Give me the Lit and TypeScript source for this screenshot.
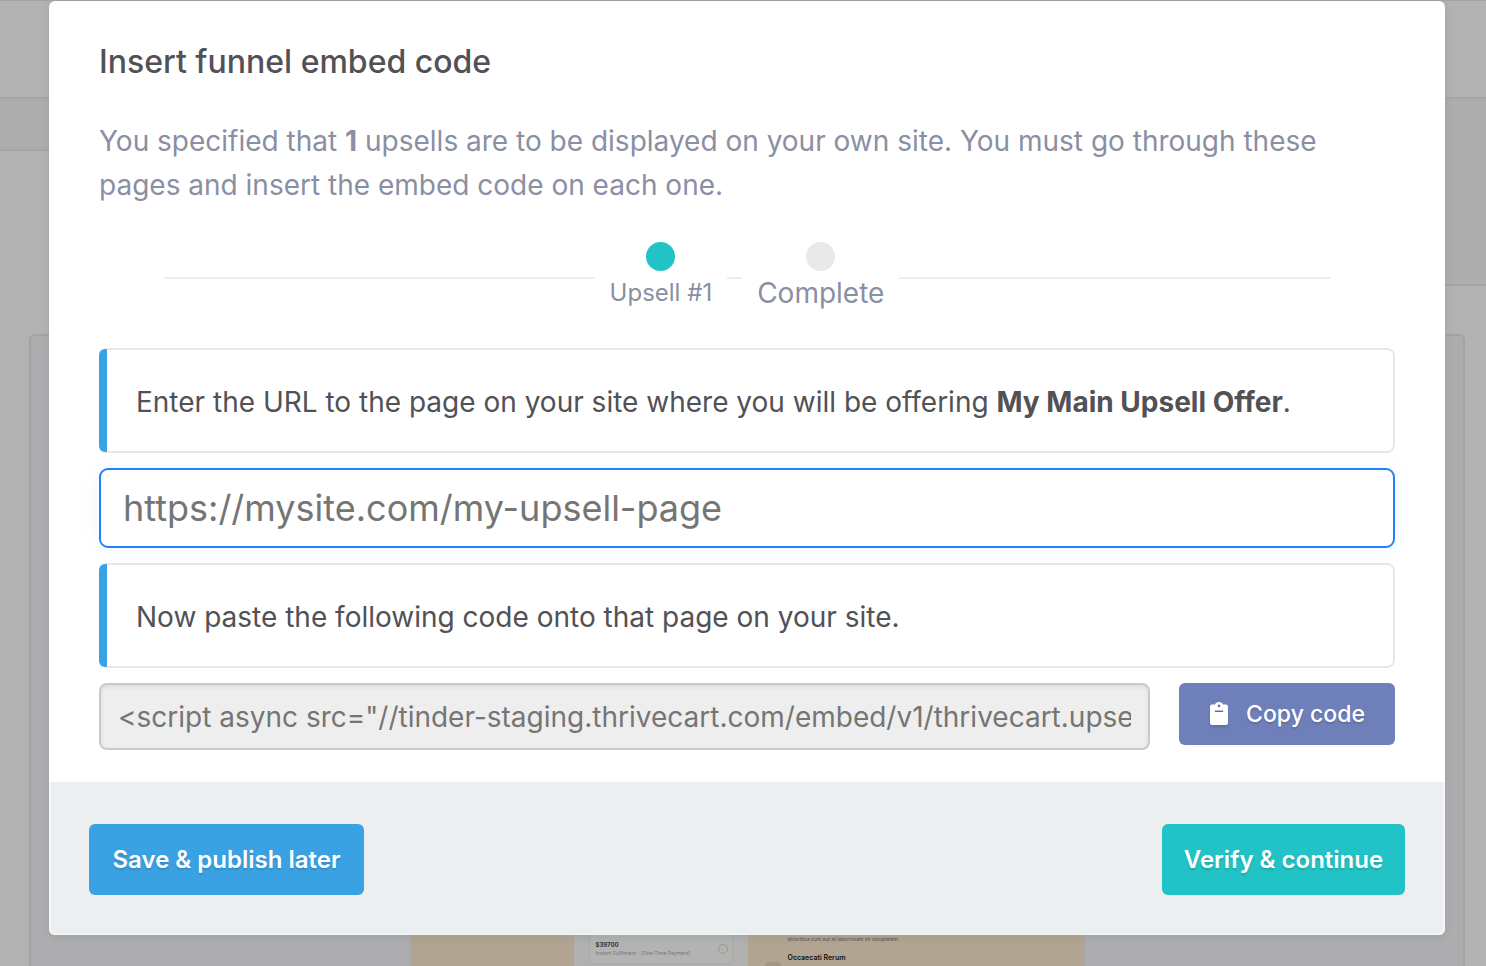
import { LitElement, html, css } from "lit";
import { customElement } from "lit/decorators.js";

const EMBED_CODE =
  '<script async src="//tinder-staging.thrivecart.com/embed/v1/thrivecart.upsell.js"></' + "script>";

/* Dimmed editor page that sits behind the dialog. */
@customElement("editor-backdrop")
export class EditorBackdrop extends LitElement {
  static styles = css`
    :host {
      display: flex;
      flex-direction: column;
      height: 100%;
      overflow: hidden;
      background: #b2b2b2;
      font-family: Inter, "Noto Sans", sans-serif;
    }
    * {
      box-sizing: border-box;
    }
    .topbar {
      flex: none;
      height: 99px;
      border-top: 1px solid #a3a3a3;
      border-bottom: 2px solid #a5a5a5;
    }
    .subbar {
      flex: none;
      height: 235px;
      display: flex;
      align-items: flex-start;
    }
    .tab,
    .side {
      flex: 1;
      background: #adadad;
      border-bottom: 2px solid #a5a5a5;
    }
    .tab {
      height: 52px;
    }
    .side {
      height: 187px;
    }
    .canvas {
      flex: 1;
      min-height: 0;
      margin: 0 21px 0 29px;
      border: 2px solid #a3a3a4;
      border-bottom: 0;
      border-radius: 6px 6px 0 0;
      background: #adadb0;
      display: flex;
      justify-content: center;
    }
    .preview {
      display: grid;
      grid-template-columns: 163px 174px 336px;
      background: #b1a592;
      border-left: 1px solid #a8a6a6;
      border-right: 1px solid #a8a6a6;
    }
    .checkout {
      grid-column: 2;
      display: flex;
      flex-direction: column;
      justify-content: flex-end;
      padding: 0 15px 2px;
      background: #b0b0b1;
    }
    .option {
      display: flex;
      align-items: center;
      justify-content: space-between;
      height: 38px;
      padding: 8px 4px 0 6px;
      border: 1px solid #a9a9a9;
      border-radius: 2px;
      background: #b3b3b3;
    }
    .price {
      font-size: 6px;
      line-height: 9px;
      font-weight: 700;
      color: #333;
    }
    .plan {
      font-size: 5px;
      line-height: 9px;
      color: #777;
      white-space: nowrap;
    }
    .ring {
      width: 10px;
      height: 10px;
      border: 1px solid #a8957b;
      border-radius: 50%;
    }
    .features {
      display: flex;
      align-items: flex-end;
      gap: 7px;
      padding: 0 17px;
    }
    .bullet {
      width: 16px;
      height: 4px;
      border-radius: 8px 8px 0 0;
      background: #a49680;
    }
    .note {
      margin: 0;
      font-size: 5px;
      line-height: 22px;
      color: #5b554b;
    }
    .heading {
      margin: 0;
      font-size: 7px;
      line-height: 16px;
      font-weight: 600;
      color: #111;
    }
  `;

  render() {
    return html`
      <div class="topbar"></div>
      <div class="subbar">
        <div class="tab"></div>
        <div class="side"></div>
      </div>
      <div class="canvas">
        <div class="preview">
          <div class="checkout">
            <div class="option">
              <div>
                <div class="price">$39700</div>
                <div class="plan">Instant Fulfilment - [One-Time Payment]</div>
              </div>
              <span class="ring"></span>
            </div>
          </div>
          <div class="features">
            <span class="bullet"></span>
            <div>
              <p class="note">doloribus cum aut at laboriosam sit voluptatem.</p>
              <p class="heading">Occaecati Rerum</p>
            </div>
          </div>
        </div>
      </div>
    `;
  }
}

@customElement("app-root")
export class AppRoot extends LitElement {
  static styles = css`
    :host {
      display: block;
      position: relative;
      height: 100vh;
      overflow: hidden;
      font-family: Inter, "Noto Sans", sans-serif;
    }
    * {
      box-sizing: border-box;
    }
    .overlay {
      position: absolute;
      inset: 0;
      padding: 1px 41px 0 49px;
    }
    .dialog {
      background: #fff;
      border-radius: 6px;
      overflow: hidden;
      box-shadow: 0 2px 8px rgba(0, 0, 0, 0.08);
    }
    .body {
      padding: 38px 50px 32px;
    }
    h1 {
      margin: 0;
      font-size: 32px;
      line-height: 46px;
      font-weight: 500;
      color: #515156;
    }
    .intro {
      margin: 34px 0 0;
      font-size: 28px;
      line-height: 44px;
      color: #8a8fa3;
    }
    .steps {
      display: flex;
      justify-content: center;
      gap: 15px;
      list-style: none;
      margin: 35px 65px 0;
      padding: 0;
      height: 71px;
      background: linear-gradient(#eaf0f0, #eaf0f0) 0 35px / 100% 2px no-repeat;
      color: #8a8fa3;
    }
    .step {
      display: flex;
      flex-direction: column;
      align-items: center;
      padding: 0 15px;
      background: #fff;
      font-size: 28px;
    }
    .current {
      font-size: 24px;
    }
    .dot {
      flex: none;
      width: 29px;
      height: 29px;
      border-radius: 50%;
      background: #e9e9e9;
    }
    .current .dot {
      background: #21c3c4;
    }
    .name {
      line-height: 44px;
    }
    .fields {
      display: flex;
      flex-direction: column;
      gap: 15px;
      margin-top: 35px;
    }
    .callout {
      display: flex;
      border: 2px solid #e8e8e8;
      border-left: 0;
      border-radius: 8px;
      color: #515156;
      font-size: 28px;
      line-height: 44px;
    }
    .callout::before {
      content: "";
      flex: none;
      width: 8px;
      margin: -1px 0;
      border-radius: 6px 0 0 6px;
      background: #39a2e3;
    }
    .callout label {
      padding: 30px 29px 27px;
    }
    input {
      display: block;
      min-width: 0;
      font-family: inherit;
      color: #757575;
      outline: none;
      margin: 0;
    }
    .url {
      width: 100%;
      height: 80px;
      padding: 0 22px;
      border: 2px solid #2280fb;
      border-radius: 9px;
      background: #fff;
      font-size: 36px;
      box-shadow: 0 0 20px rgba(34, 128, 251, 0.07);
    }
    .url::placeholder {
      color: #757575;
      opacity: 1;
    }
    .copy-row {
      display: flex;
      align-items: flex-start;
      gap: 29px;
    }
    .code {
      flex: 1;
      height: 67px;
      padding: 0 17px;
      border: 2px solid #c9c9c9;
      border-radius: 8px;
      background: #eeeeee;
      font-size: 28px;
      box-shadow: inset 0 2px 5px rgba(0, 0, 0, 0.07);
    }
    button {
      display: flex;
      align-items: center;
      justify-content: center;
      border: 0;
      border-radius: 6px;
      color: #fff;
      font-family: inherit;
      font-size: 24px;
      line-height: 30px;
      font-weight: 600;
      white-space: nowrap;
      text-shadow: 0 2px 2px rgba(0, 0, 0, 0.14);
    }
    .copy {
      min-width: 216px;
      height: 62px;
      gap: 17px;
      padding: 0 28px;
      font-size: 23px;
      font-weight: 500;
      background: #6f7fb9;
    }
    .copy svg {
      width: 20px;
      height: 24px;
      filter: drop-shadow(0 2px 1px rgba(0, 0, 0, 0.14));
    }
    .footer {
      display: flex;
      justify-content: space-between;
      padding: 42px 38px 39px;
      border: 2px solid #f4f7f7;
      border-top: 0;
      border-bottom-width: 1px;
      border-radius: 0 0 6px 6px;
      background: #ebeff0;
    }
    .footer button {
      height: 71px;
      padding: 0 18px;
    }
    .later {
      min-width: 275px;
      background: #3aa2e3;
    }
    .verify {
      min-width: 243px;
      background: #22c3c6;
    }
  `;

  render() {
    return html`
      <editor-backdrop></editor-backdrop>
      <div class="overlay">
        <section class="dialog" role="dialog" aria-labelledby="title">
          <div class="body">
            <h1 id="title">Insert funnel embed code</h1>
            <p class="intro">
              You specified that <strong>1</strong> upsells are to be displayed on your own site.
              You must go through these pages and insert the embed code on each one.
            </p>
            <ol class="steps">
              <li class="step current"><span class="dot"></span><span class="name">Upsell #1</span></li>
              <li class="step"><span class="dot"></span><span class="name">Complete</span></li>
            </ol>
            <div class="fields">
              <div class="callout">
                <label for="url"
                  >Enter the URL to the page on your site where you will be offering
                  <strong>My Main Upsell Offer</strong>.</label
                >
              </div>
              <input class="url" id="url" type="url" placeholder="https://mysite.com/my-upsell-page" />
              <div class="callout">
                <label for="code">Now paste the following code onto that page on your site.</label>
              </div>
              <div class="copy-row">
                <input class="code" id="code" type="text" readonly .value=${EMBED_CODE} />
                <button class="copy" type="button">
                  <svg viewBox="0 0 20 24" aria-hidden="true">
                    <path
                      fill="#fff"
                      fill-rule="evenodd"
                      d="M3 2.600h3C6.400 1 8 0 10 0s3.600 1 4 2.600h3a2 2 0 0 1 2 2V21a2 2 0 0 1-2 2H3a2 2 0 0 1-2-2V4.600a2 2 0 0 1 2-2zM10 2.600a1.300 1.300 0 1 0 0 2.600 1.300 1.300 0 0 0 0-2.600zM6.300 8.600a.6.6 0 0 0 0 1.300h7.400a.6.6 0 0 0 0-1.300z"
                    />
                  </svg>
                  Copy code
                </button>
              </div>
            </div>
          </div>
          <div class="footer">
            <button class="later" type="button">Save &amp; publish later</button>
            <button class="verify" type="button">Verify &amp; continue</button>
          </div>
        </section>
      </div>
    `;
  }
}
